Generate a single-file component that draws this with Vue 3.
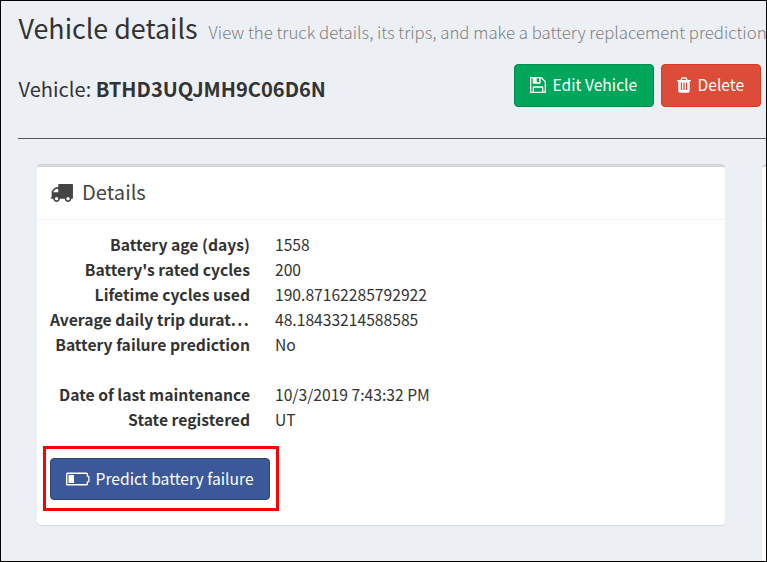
<script setup>
const groups = [
  [
    { label: 'Battery age (days)', value: '1558' },
    { label: "Battery's rated cycles", value: '200' },
    { label: 'Lifetime cycles used', value: '190.87162285792922' },
    { label: 'Average daily trip durat', clipped: true, value: '48.18433214588585' },
    { label: 'Battery failure prediction', value: 'No' },
  ],
  [
    { label: 'Date of last maintenance', value: '10/3/2019 7:43:32 PM' },
    { label: 'State registered', value: 'UT' },
  ],
]
</script>

<template>
  <main class="page">
    <header class="title-row">
      <h1>Vehicle details</h1>
      <small>View the truck details, its trips, and make a battery replacement prediction</small>
    </header>

    <section class="vehicle-row">
      <h2>Vehicle: <b>BTHD3UQJMH9C06D6N</b></h2>
      <div class="actions">
        <button class="btn edit">
          <svg class="save-icon" viewBox="128 128 1536 1536"><path d="M512 1536h768v-384h-768v384zm896 0h128v-896q0-14-10-38.500t-20-34.500l-281-281q-10-10-34-20t-39-10v416q0 40-28 68t-68 28h-576q-40 0-68-28t-28-68v-416h-128v1280h128v-416q0-40 28-68t68-28h832q40 0 68 28t28 68v416zm-384-928v-320q0-13-9.500-22.500t-22.500-9.500h-192q-13 0-22.500 9.500t-9.500 22.500v320q0 13 9.500 22.500t22.500 9.500h192q13 0 22.500-9.500t9.500-22.500zm640 32v928q0 40-28 68t-68 28h-1344q-40 0-68-28t-28-68v-1344q0-40 28-68t68-28h928q40 0 88 20t76 48l280 280q28 28 48 76t20 88z" /></svg>
          <span>Edit Vehicle</span>
        </button>
        <button class="btn delete">
          <svg class="trash-icon" viewBox="192 128 1408 1536"><path d="M704 1376v-704q0-14-9-23t-23-9h-64q-14 0-23 9t-9 23v704q0 14 9 23t23 9h64q14 0 23-9t9-23zm256 0v-704q0-14-9-23t-23-9h-64q-14 0-23 9t-9 23v704q0 14 9 23t23 9h64q14 0 23-9t9-23zm256 0v-704q0-14-9-23t-23-9h-64q-14 0-23 9t-9 23v704q0 14 9 23t23 9h64q14 0 23-9t9-23zm-544-992h448l-48-117q-7-9-17-11h-317q-10 2-17 11zm928 32v64q0 14-9 23t-23 9h-96v948q0 83-47 143.500t-113 60.500h-832q-66 0-113-58.500t-47-141.500v-952h-96q-14 0-23-9t-9-23v-64q0-14 9-23t23-9h309l70-167q15-37 54-63t79-26h320q40 0 79 26t54 63l70 167h309q14 0 23 9t9 23z" /></svg>
          <span>Delete</span>
        </button>
      </div>
    </section>

    <div class="columns">
      <article class="box">
        <div class="box-header">
          <svg class="truck-icon" viewBox="0 256 1792 1408"><path d="M640 1408q0-52-38-90t-90-38-90 38-38 90 38 90 90 38 90-38 38-90zm-384-512h384v-256h-158q-13 0-22 9l-195 195q-9 9-9 22v30zm1280 512q0-52-38-90t-90-38-90 38-38 90 38 90 90 38 90-38 38-90zm256-1088v1024q0 15-4 26.500t-13.500 18.500-16.500 11.500-23.500 6-22.500 2-25.500 0-22.500-.5q0 106-75 181t-181 75-181-75-75-181h-384q0 106-75 181t-181 75-181-75-75-181h-64q-3 0-22.500.5t-25.500 0-22.500-2-23.500-6-16.500-11.500-13.500-18.500-4-26.500q0-26 19-45t45-19v-320q0-8-.5-35t0-38 2.500-34.500 6.500-37 14-30.500 22.500-30l198-198q19-19 50.500-32t58.500-13h160v-192q0-26 19-45t45-19h1024q26 0 45 19t19 45z" /></svg>
          <h3>Details</h3>
        </div>
        <div class="box-body">
          <dl v-for="(group, i) in groups" :key="i">
            <template v-for="row in group" :key="row.label">
              <dt>{{ row.label }}<span v-if="row.clipped" class="dots">...</span></dt>
              <dd>{{ row.value }}</dd>
            </template>
          </dl>
          <div class="predict-wrap">
            <button class="btn predict">
              <svg class="battery-icon" viewBox="0 0 24 14"><path fill-rule="evenodd" d="M1.500 0.500H20.500Q22 0.500 22 2V3.500Q23.500 3.500 23.500 5V9Q23.500 10.500 22 10.500V12Q22 13.500 20.500 13.500H1.500Q0 13.500 0 12V2Q0 0.500 1.500 0.500ZM1.400 1.900V12.100H20.700V9.300H22.200V4.700H20.700V1.900Z" /><path d="M2.500 3H8V11H2.500Z" /></svg>
              <span>Predict battery failure</span>
            </button>
            <i class="highlight"></i>
          </div>
        </div>
      </article>
      <article class="box next-box"><div class="box-header"></div></article>
    </div>
  </main>
</template>

<style>
body {
  margin: 0;
}
</style>

<style scoped>
* {
  box-sizing: border-box;
}
.page {
  width: 767px;
  height: 562px;
  overflow: hidden;
  display: flex;
  flex-direction: column;
  border: 1px solid #000;
  background: #ecf0f5;
  color: #333;
  font-family: "Noto Sans CJK SC", "Noto Sans", sans-serif;
  font-size: 15.65px;
  line-height: 25px;
}
h1, h2, h3, dl, dd {
  margin: 0;
  font-weight: 400;
}
h1, h2, h3, small, span, dd {
  white-space: nowrap;
}
.title-row {
  display: flex;
  align-items: baseline;
  gap: 11px;
  height: 58px;
  flex: none;
  padding: 10px 0 0 17.5px;
}
h1 {
  font-size: 26.85px;
  line-height: 33px;
}
small {
  font-size: 16.8px;
  font-weight: 300;
  color: #808080;
}
.vehicle-row {
  display: flex;
  justify-content: space-between;
  flex: none;
  height: 80px;
  margin-left: 17px;
  padding: 5px 5px 0 0;
  border-bottom: 1px solid #55585c;
}
h2 {
  padding-left: 0.5px;
  font-size: 20.1px;
  line-height: 50px;
}
.actions {
  display: flex;
  gap: 7px;
}
.btn {
  display: flex;
  align-items: center;
  gap: 7px;
  height: 43px;
  padding: 0 0 0 14.5px;
  border: 1px solid;
  border-radius: 4px;
  color: #fff;
  font: inherit;
}
.btn svg {
  flex: none;
  fill: #fff;
}
.btn span {
  padding-bottom: 2px;
}
.edit {
  width: 140px;
  background: #00a65a;
  border-color: #008d4c;
}
.delete {
  width: 100px;
  background: #dd4b39;
  border-color: #d73925;
}
.save-icon {
  width: 16px;
  height: 16px;
  margin-bottom: 2px;
}
.trash-icon {
  width: 14px;
  height: 16px;
  margin-bottom: 2px;
}
.columns {
  display: flex;
  gap: 37px;
  padding: 25px 0 0 36px;
  flex: 1;
}
.box {
  width: 688px;
  height: 361px;
  flex: none;
  background: #fff;
  border-top: 3px solid #d2d6de;
  border-radius: 4px;
  box-shadow: 0 1px 1px rgba(0, 0, 0, 0.1);
}
.next-box {
  height: 420px;
}
.box-header {
  display: flex;
  align-items: center;
  gap: 9.5px;
  height: 53px;
  padding: 0 12.5px;
  border-bottom: 1px solid #f4f4f4;
  color: #444;
}
.truck-icon {
  width: 23px;
  height: 18px;
  fill: #444;
}
h3 {
  padding-bottom: 3px;
  font-size: 20.1px;
}
.box-body {
  padding: 12px 13px;
}
dl {
  display: grid;
  grid-template-columns: 200px 1fr;
  column-gap: 25px;
  margin-bottom: 25px;
}
dt {
  font-size: 15.7px;
  font-weight: 700;
  text-align: right;
  white-space: nowrap;
}
.dots {
  letter-spacing: 1.4px;
}
.predict-wrap {
  position: relative;
  width: 220px;
  margin-top: 26px;
}
.predict {
  gap: 6px;
  width: 220px;
  height: 42px;
  padding-left: 14.5px;
  background: #3b5998;
  border-color: #2d4373;
}
.battery-icon {
  width: 24px;
  height: 14px;
  margin-bottom: 1px;
}
.highlight {
  position: absolute;
  inset: -12px -9px -11px -7px;
  border: 3px solid #f00;
}
</style>
